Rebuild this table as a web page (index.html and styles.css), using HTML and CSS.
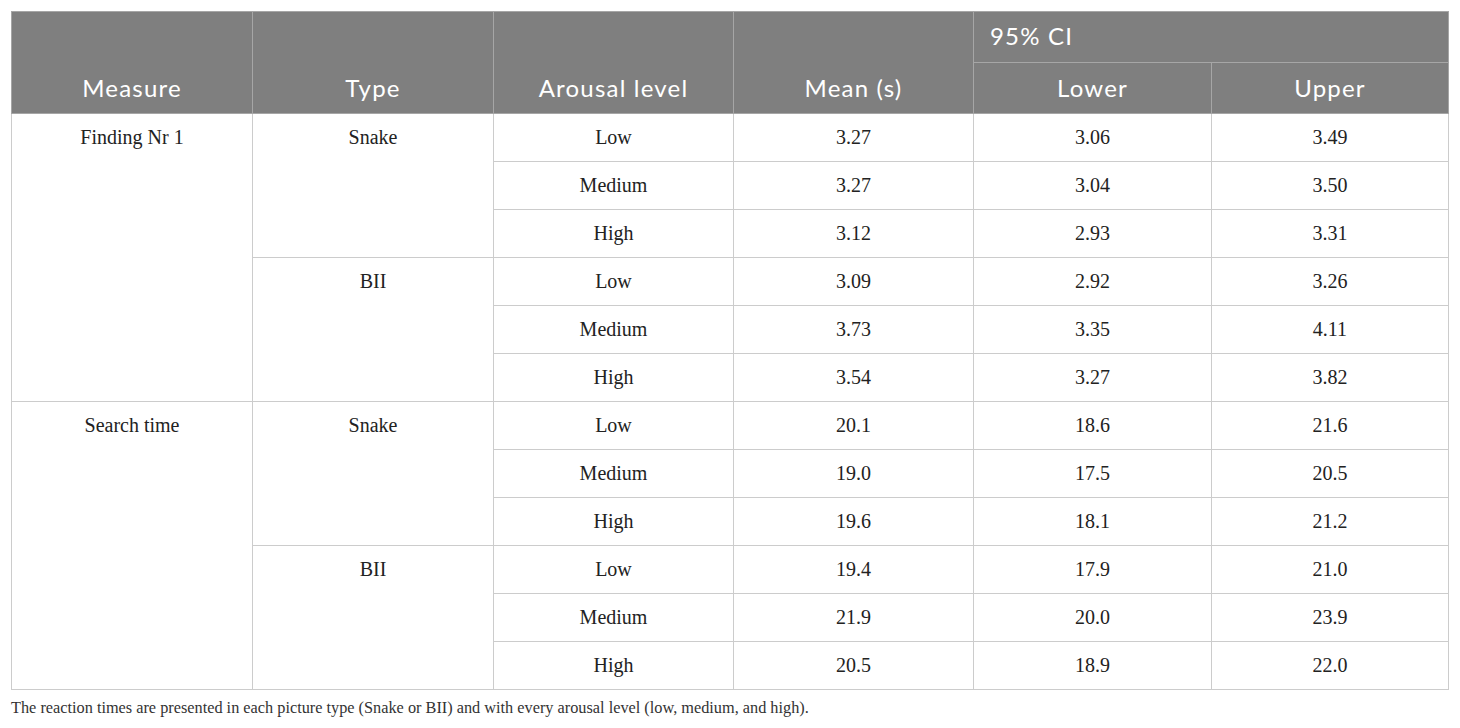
FILE: index.html
```html
<!DOCTYPE html>
<html lang="en">
<head>
    <meta charset="UTF-8">
    <title>Reaction times</title>
    <link rel="stylesheet" href="styles.css">
</head>
<body>
    <div class="table-wrap">
        <table class="data-table">
            <colgroup>
                <col class="c-wide">
                <col class="c-wide">
                <col class="c-mid">
                <col class="c-mid">
                <col class="c-ci">
                <col class="c-last">
            </colgroup>
            <thead>
                <tr>
                    <th rowspan="2">Measure</th>
                    <th rowspan="2">Type</th>
                    <th rowspan="2">Arousal level</th>
                    <th rowspan="2">Mean (s)</th>
                    <th colspan="2" class="ci">95% CI</th>
                </tr>
                <tr>
                    <th class="sub">Lower</th>
                    <th class="sub">Upper</th>
                </tr>
            </thead>
            <tbody>
                <tr>
                    <td rowspan="6" class="group">Finding Nr 1</td>
                    <td rowspan="3" class="group">Snake</td>
                    <td>Low</td><td>3.27</td><td>3.06</td><td>3.49</td>
                </tr>
                <tr><td>Medium</td><td>3.27</td><td>3.04</td><td>3.50</td></tr>
                <tr><td>High</td><td>3.12</td><td>2.93</td><td>3.31</td></tr>
                <tr>
                    <td rowspan="3" class="group">BII</td>
                    <td>Low</td><td>3.09</td><td>2.92</td><td>3.26</td>
                </tr>
                <tr><td>Medium</td><td>3.73</td><td>3.35</td><td>4.11</td></tr>
                <tr><td>High</td><td>3.54</td><td>3.27</td><td>3.82</td></tr>
                <tr>
                    <td rowspan="6" class="group">Search time</td>
                    <td rowspan="3" class="group">Snake</td>
                    <td>Low</td><td>20.1</td><td>18.6</td><td>21.6</td>
                </tr>
                <tr><td>Medium</td><td>19.0</td><td>17.5</td><td>20.5</td></tr>
                <tr><td>High</td><td>19.6</td><td>18.1</td><td>21.2</td></tr>
                <tr>
                    <td rowspan="3" class="group">BII</td>
                    <td>Low</td><td>19.4</td><td>17.9</td><td>21.0</td>
                </tr>
                <tr><td>Medium</td><td>21.9</td><td>20.0</td><td>23.9</td></tr>
                <tr><td>High</td><td>20.5</td><td>18.9</td><td>22.0</td></tr>
            </tbody>
        </table>
        <p class="table-note">The reaction times are presented in each picture type (Snake or BII) and with every arousal level (low, medium, and high).</p>
    </div>
</body>
</html>
```

FILE: styles.css
```css
:root {
    --head-bg: #7f7f7f;
    --head-line: #a6a6a6;
    --grid-line: #cccccc;
    --text: #222222;
}

* {
    box-sizing: border-box;
    margin: 0;
    padding: 0;
}

body {
    background: #ffffff;
    color: var(--text);
    font-family: "Liberation Serif", "Times New Roman", serif;
}

.table-wrap {
    padding: 11px 12px 0 11px;
}

.data-table {
    width: 1437px;
    border-collapse: collapse;
    table-layout: fixed;
}

.c-wide { width: 241px; }
.c-mid { width: 240px; }
.c-ci { width: 238px; }
.c-last { width: 237px; }

.data-table th {
    background: var(--head-bg);
    color: #ffffff;
    font-family: Lato, "Open Sans", sans-serif;
    font-weight: 400;
    font-size: 24px;
    letter-spacing: 1.2px;
    height: 51px;
    border: 1px solid var(--head-line);
    vertical-align: bottom;
    text-align: center;
    padding: 0 8px 11px;
}

.data-table th.ci {
    text-align: left;
    vertical-align: middle;
    padding: 0 16px 4px;
}

.data-table td {
    height: 48px;
    border: 1px solid var(--grid-line);
    font-size: 20px;
    text-align: center;
    vertical-align: middle;
    padding: 0 8px;
}

.data-table td.group {
    vertical-align: top;
    padding-top: 12px;
}

.table-note {
    font-size: 16.3px;
    color: #333333;
    margin-top: 8px;
}
```
